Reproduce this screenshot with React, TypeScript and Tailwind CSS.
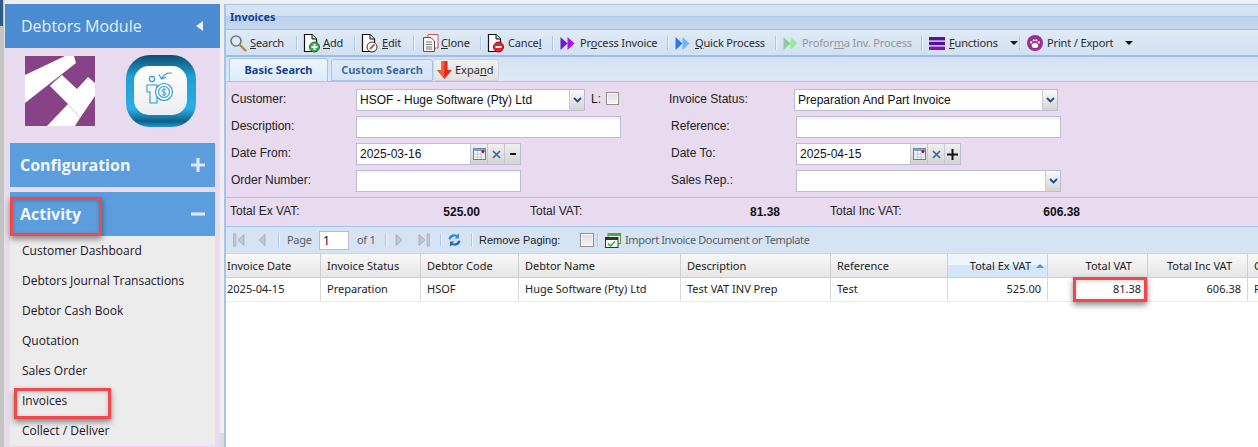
import React from "react";

const Paper = ({ children }: { children?: React.ReactNode }) => (
  <svg width="20" height="20" viewBox="0 0 20 20" className="-ml-[3px] shrink-0">
    <path d="M3.5 1.5H11L15.5 6V18.5H3.5Z" fill="#fff" stroke="#111" strokeWidth="1.2" />
    <path d="M11 1.5V6H15.5" fill="#ddd" stroke="#111" strokeWidth="1" />
    {children}
  </svg>
);

const Search = () => (
  <svg width="18" height="18" viewBox="0 0 18 18" className="shrink-0">
    <circle cx="7" cy="7" r="5" fill="#dfeaf5" stroke="#6b7785" strokeWidth="1.6" />
    <path d="M11 11L16.5 16.5" stroke="#b08a4a" strokeWidth="2.4" strokeLinecap="round" />
  </svg>
);
const Add = () => (
  <Paper>
    <circle cx="13.5" cy="14" r="5" fill="#3eaa4a" stroke="#1f7a2c" />
    <path d="M13.5 11V17M10.5 14H16.5" stroke="#fff" strokeWidth="1.8" />
  </Paper>
);
const Edit = () => (
  <Paper>
    <circle cx="13" cy="14" r="5" fill="#fff" stroke="#333" />
    <path d="M11 16L15.5 11.5" stroke="#d9532c" strokeWidth="2" />
  </Paper>
);
const Clone = () => (
  <svg width="20" height="20" viewBox="0 0 20 20" className="shrink-0">
    <path d="M7 1.5H17V15H7Z" fill="#fff" stroke="#d9534f" />
    <path d="M2.5 4.5H10L13.5 8V18.5H2.5Z" fill="#f7f7f7" stroke="#555" />
    <path d="M5 9H11M5 11.5H11M5 14H11M5 16H11" stroke="#777" />
  </svg>
);
const Cancel = () => (
  <Paper>
    <circle cx="13.5" cy="14" r="5" fill="#e3202c" stroke="#a8101a" />
    <path d="M10.5 14H16.5" stroke="#fff" strokeWidth="2" />
  </Paper>
);
const Chevs = ({ a, b }: { a: string; b: string }) => (
  <svg width="15" height="15" viewBox="0 0 15 15" className="shrink-0">
    <path d="M0.5 1L7.5 7.5L0.5 14Z" fill={a} />
    <path d="M7.5 1L14.5 7.5L7.5 14Z" fill={b} />
  </svg>
);
const Bars = () => (
  <svg width="16" height="13" viewBox="0 0 16 13" className="shrink-0">
    <rect width="16" height="3.4" fill="#5a0f9c" />
    <rect y="4.8" width="16" height="3.4" fill="#5a0f9c" />
    <rect y="9.6" width="16" height="3.4" fill="#7a14b8" />
  </svg>
);
const Paw = () => (
  <svg width="16" height="16" viewBox="0 0 16 16" className="shrink-0">
    <circle cx="8" cy="8" r="8" fill="#a02c94" />
    <ellipse cx="8" cy="10.4" rx="3.2" ry="2.5" fill="#fff" />
    <circle cx="4.2" cy="7.4" r="1.1" fill="#fff" />
    <circle cx="6.7" cy="5.3" r="1.1" fill="#fff" />
    <circle cx="9.3" cy="5.3" r="1.1" fill="#fff" />
    <circle cx="11.8" cy="7.4" r="1.1" fill="#fff" />
  </svg>
);
const Caret = () => <span className="ml-[8px] inline-block h-0 w-0 border-x-[4px] border-t-[4px] border-x-transparent border-t-[#111]" />;

const Sep = () => <span className="block h-[14px] w-px shrink-0 bg-[#a8c8ee] shadow-[1px_0_0_#eef4fb]" />;

const U = ({ children }: { children: React.ReactNode }) => <span className="underline underline-offset-1">{children}</span>;

const tools: { icon: React.ReactNode; label: React.ReactNode; cls: string; text?: string; gap: string }[] = [
  { icon: <Search />, label: <><U>S</U>earch</>, cls: "w-[67px]", gap: "gap-[3px]" },
  { icon: <Add />, label: <><U>A</U>dd</>, cls: "w-[50px]", gap: "gap-[2px]" },
  { icon: <Edit />, label: <><U>E</U>dit</>, cls: "w-[51px]", gap: "gap-[3px]" },
  { icon: <Clone />, label: <><U>C</U>lone</>, cls: "w-[59px]", gap: "gap-0" },
  { icon: <Cancel />, label: <>Cance<U>l</U></>, cls: "w-[64px]", gap: "gap-[3px]" },
  { icon: <Chevs a="#6a1fc4" b="#b20ff0" />, label: <>Pr<U>o</U>cess Invoice</>, cls: "w-[107px]", gap: "gap-[5px]" },
  { icon: <Chevs a="#2f74f0" b="#6db4f8" />, label: <><U>Q</U>uick Process</>, cls: "w-[100px]", gap: "gap-[5px]" },
  { icon: <Chevs a="#90c8a0" b="#90f090" />, label: <>Profor<U>m</U>a Inv. Process</>, cls: "w-[138px]", text: "text-[#8e959c]", gap: "gap-[4px]" },
  { icon: <Bars />, label: <><U>F</U>unctions</>, cls: "w-[90px]", gap: "gap-[4px]" },
  { icon: <Paw />, label: <>Print / Export</>, cls: "w-[110px]", gap: "gap-[4px]" },
];

const Input = ({ w, v }: { w: string; v?: string }) => (
  <div className={`${w} h-[22px] shrink-0 border border-[#b9bdcf] bg-white bg-[linear-gradient(#f0f0f0,#fff_4px)] px-[3px] text-[12px] leading-[21px] text-[#111]`}>{v}</div>
);
const Combo = ({ w, v }: { w: string; v?: string }) => (
  <div className={`${w} flex h-[22px] shrink-0 border border-[#b9bdcf] bg-white text-[12px] leading-[21px] text-[#111]`}>
    <span className="flex-1 px-[3px]">{v}</span>
    <span className="flex w-[15px] items-center justify-center border-l border-[#c8ccd6] bg-[linear-gradient(#fafafa,#d4d4d4)]">
      <svg width="9" height="6" viewBox="0 0 9 6"><path d="M1 1L4.5 4.5L8 1" fill="none" stroke="#1d4a8c" strokeWidth="1.8" /></svg>
    </span>
  </div>
);
const DateField = ({ v, last }: { v: string; last: React.ReactNode }) => (
  <div className="flex h-[22px] w-[165px] shrink-0 border border-[#b9bdcf] bg-white text-[12px] leading-[21px] text-[#111]">
    <span className="w-[113px] px-[3px]">{v}</span>
    <span className="flex w-[17px] items-center justify-center border-l border-[#c2c6d0] bg-[linear-gradient(#f0f0f0,#d0d0d0)]">
      <svg width="13" height="12" viewBox="0 0 13 12">
        <rect x="0.5" y="0.5" width="12" height="11" fill="#fff" stroke="#5b7fa8" />
        <rect x="0.5" y="0.5" width="12" height="2.5" fill="#7f9fc4" />
        <path d="M1 6H12M1 9H12M4.5 3V11M8 3V11" stroke="#b8c8da" />
        <circle cx="10" cy="3.5" r="1.6" fill="#a01030" />
      </svg>
    </span>
    <span className="flex w-[17px] items-center justify-center border-l border-[#c2c6d0] bg-[linear-gradient(#f0f0f0,#d4d4d4)]">
      <svg width="9" height="9" viewBox="0 0 9 9"><path d="M1 1L8 8M8 1L1 8" stroke="#2e6aa8" strokeWidth="1.7" /></svg>
    </span>
    <span className="flex w-[16px] items-center justify-center border-l border-[#c2c6d0] bg-[linear-gradient(#f0f0f0,#d4d4d4)]">{last}</span>
  </div>
);
const Label = ({ cls, children }: { cls: string; children: React.ReactNode }) => (
  <span className={`${cls} -mt-[3px] shrink-0 text-[12px] leading-[22px] text-[#222]`}>{children}</span>
);

const Total = ({ label, value }: { label: string; value: string }) => (
  <div className="flex w-[300px] shrink-0 items-center justify-between pr-[50px]">
    <span className="-mt-[2px] text-[12px] text-[#222]">{label}</span>
    <span className="text-[12px] font-bold text-[#111]">{value}</span>
  </div>
);

const cols: { w: string; t: string; v: string; right?: boolean; sort?: boolean; pad: string; hd: string }[] = [
  { w: "w-[95px]", t: "Invoice Date", v: "2025-04-15", pad: "pl-[1px]", hd: "pl-[1px]" },
  { w: "w-[100px]", t: "Invoice Status", v: "Preparation", pad: "pl-[6px]", hd: "pl-[6px]" },
  { w: "w-[98px]", t: "Debtor Code", v: "HSOF", pad: "pl-[6px]", hd: "pl-[6px]" },
  { w: "w-[162px]", t: "Debtor Name", v: "Huge Software (Pty) Ltd", pad: "pl-[6px]", hd: "pl-[6px]" },
  { w: "w-[150px]", t: "Description", v: "Test VAT INV Prep", pad: "pl-[6px]", hd: "pl-[6px]" },
  { w: "w-[117px]", t: "Reference", v: "Test", pad: "pl-[6px]", hd: "pl-[6px]" },
  { w: "w-[100px]", t: "Total Ex VAT", v: "525.00", right: true, sort: true, pad: "justify-end pr-[6px]", hd: "justify-end pr-[15px]" },
  { w: "w-[100px]", t: "Total VAT", v: "81.38", right: true, pad: "justify-end pr-[6px]", hd: "justify-end pr-[15px]" },
  { w: "w-[100px]", t: "Total Inc VAT", v: "606.38", right: true, pad: "justify-end pr-[6px]", hd: "justify-end pr-[15px]" },
  { w: "w-[40px]", t: "C", v: "P", pad: "pl-[6px]", hd: "pl-[6px]" },
];

const NavTri = ({ dir, bar }: { dir: "l" | "r"; bar?: boolean }) => (
  <svg width="12" height="14" viewBox="0 0 12 14" className="shrink-0">
    {dir === "l" ? (
      <>
        {bar && <rect x="0.5" y="1" width="2.5" height="12" fill="#c4cad2" stroke="#9aa2ac" strokeWidth="0.6" />}
        <path d="M11 1.5V12.5L5 7Z" fill="#c0c6ce" stroke="#9aa2ac" strokeWidth="0.7" />
      </>
    ) : (
      <>
        <path d="M1 1.5V12.5L7 7Z" fill="#c0c6ce" stroke="#9aa2ac" strokeWidth="0.7" />
        {bar && <rect x="9" y="1" width="2.5" height="12" fill="#c4cad2" stroke="#9aa2ac" strokeWidth="0.6" />}
      </>
    )}
  </svg>
);

const Red = ({ cls }: { cls: string }) => (
  <div className={`${cls} absolute border-[3px] border-[#f2474b] shadow-[0_3px_6px_rgba(0,0,0,0.45),inset_0_1px_4px_rgba(0,0,0,0.2)]`} />
);

const menu = ["Customer Dashboard", "Debtors Journal Transactions", "Debtor Cash Book", "Quotation", "Sales Order", "Invoices", "Collect / Deliver"];

export default function App() {
  return (
    <div className="relative flex h-[447px] w-[1258px] overflow-hidden bg-[#efefef] font-['Noto_Sans',sans-serif]">
      <div className="h-full w-[5px] shrink-0 border-r border-[#e2e2e2] bg-[#c4c4c4]">
        <div className="h-[26px] w-[3px] bg-[#2e5c86]" />
      </div>

      {/* sidebar */}
      <aside className="mt-[4px] flex w-[215px] shrink-0 flex-col bg-[#e8daef] font-['Open_Sans',sans-serif]">
        <div className="flex h-[44px] items-center justify-between bg-[#4a8bd2] pl-[16px] pr-[17px] text-[16px] text-[#e6eef8]">
          <span>Debtors Module</span>
          <span className="h-0 w-0 border-y-[5px] border-r-[7px] border-y-transparent border-r-[#e6eef8]" />
        </div>
        <div className="flex h-[95px] items-start pl-[20px] pt-[8px]">
          <svg width="70" height="70" viewBox="0 0 70 70" className="shrink-0">
            <rect width="70" height="70" fill="#874385" />
            <path d="M0 19L40 0H49L51 7L0 47Z" fill="#fff" />
            <path d="M25 30L37 19L52 33L63 21L70 27V40L55 62L43 48Z" fill="#fff" />
            <path d="M22 70L43 48L55 62L50 70Z" fill="#fff" />
            <path d="M25 30L37 19M43 48L55 62" stroke="#d4d4d4" strokeWidth="0.8" />
          </svg>
          <svg width="72" height="74" viewBox="0 0 72 74" className="ml-[30px] -mt-[2px] shrink-0">
            <defs>
              <linearGradient id="ring" x1="0" y1="0" x2="0" y2="1">
                <stop offset="0" stopColor="#0f4f70" />
                <stop offset="0.3" stopColor="#1f9fd6" />
                <stop offset="0.75" stopColor="#2aaee4" />
                <stop offset="0.92" stopColor="#0f5f88" />
                <stop offset="1" stopColor="#1c9ad8" />
              </linearGradient>
              <linearGradient id="pad" x1="0" y1="0" x2="0" y2="1">
                <stop offset="0" stopColor="#ffffff" />
                <stop offset="1" stopColor="#ebeef0" />
              </linearGradient>
            </defs>
            <rect x="1" y="1" width="70" height="72" rx="24" fill="url(#ring)" />
            <rect x="9" y="12" width="53" height="49" rx="15" fill="url(#pad)" />
            <circle cx="27" cy="25" r="2.6" fill="none" stroke="#2b9ad0" strokeWidth="1.1" />
            <path d="M22 38V31H32V49H25V38Z" fill="none" stroke="#2b9ad0" strokeWidth="1.1" />
            <circle cx="39" cy="38" r="8.5" fill="#f6f8f9" stroke="#2b9ad0" strokeWidth="1.1" />
            <circle cx="39" cy="38" r="5.5" fill="none" stroke="#2b9ad0" strokeWidth="1.1" />
            <path d="M41 36C40 34.800 37 35 37 36.800C37 38.800 41 37.800 41 39.800C41 41.400 38 41.600 37 40.500M39 33.800V42.200" fill="none" stroke="#2b9ad0" strokeWidth="0.9" />
            <path d="M47 19C42 18.500 39 20.500 37 24M34 20.500L36.500 25L41 23" fill="none" stroke="#2b9ad0" strokeWidth="1.1" />
          </svg>
        </div>
        <div className="px-[5px]">
          <div className="flex h-[44px] items-center justify-between bg-[#5c9edd] pl-[10px] pr-[10px] text-[16px] font-bold text-[#f2f7fc]">
            <span>Configuration</span>
            <svg width="14" height="14" viewBox="0 0 14 14"><path d="M7 0V14M0 7H14" stroke="#dce8f5" strokeWidth="3.2" /></svg>
          </div>
          <div className="mt-[5px] flex h-[44px] items-center justify-between bg-[#5c9edd] pl-[10px] pr-[10px] text-[16px] font-bold text-[#f2f7fc]">
            <span>Activity</span>
            <svg width="14" height="14" viewBox="0 0 14 14"><path d="M0 7H14" stroke="#dce8f5" strokeWidth="3.2" /></svg>
          </div>
          <ul className="flex flex-col bg-[#ececec] pl-[12px] text-[12px] text-[#1c1428]">
            {menu.map((m) => (
              <li key={m} className="flex h-[30px] items-center">{m}</li>
            ))}
          </ul>
        </div>
      </aside>

      <div className="flex h-full w-[4px] shrink-0 flex-col">
        <div className="flex-1 bg-[#efefef]" />
        <div className="h-[14px] bg-[#dcdcdc]" />
      </div>

      {/* main */}
      <main className="mt-[4px] flex min-w-0 flex-1 flex-col border-l-2 border-t border-[#a4c4ea] bg-white">
        <div className="flex h-[24px] shrink-0 items-start bg-[linear-gradient(#d6e4f5_0,#d2e1f3_11px,#aac7ea_11px,#bcd1ed_12px,#c6d8ef_100%)] pl-[4px] text-[11px] font-bold leading-[24px] text-[#15428b]">
          Invoices
        </div>
        <div className="flex h-[28px] shrink-0 items-center border-y border-[#9dbde8] border-b-[2px] bg-[linear-gradient(#e0eaf6,#d2e0f1)] pl-[3px] pt-[1px] text-[11px] tracking-[-0.15px] text-[#2a2a2a]">
          {tools.map((t, i) => (
            <React.Fragment key={i}>
              <div className={`${t.cls} ${t.text ?? ""} ${t.gap} flex shrink-0 items-center whitespace-nowrap`}>
                {t.icon}
                <span>{t.label}</span>
                {i >= 8 && <Caret />}
              </div>
              {i < tools.length - 1 && <Sep />}
              {i < tools.length - 1 && <span className="w-[7px] shrink-0" />}
            </React.Fragment>
          ))}
        </div>
        <div className="flex h-[25px] shrink-0 items-end border-b border-[#a4c4ea] bg-[linear-gradient(#d4e1f2,#dde9f7)] pl-[3px] text-[11px] font-bold">
          <div className="flex h-[23px] w-[99px] items-center justify-center rounded-t-[3px] border border-b-0 border-[#a4c4ea] bg-[linear-gradient(#eef5fd,#dcebfb)] text-[#15428b]">Basic Search</div>
          <div className="ml-[3px] flex h-[22px] w-[102px] items-center justify-center rounded-t-[3px] border border-[#a4c4ea] bg-[linear-gradient(#dfeaf8,#d6e5f7)] text-[#3c6ba6]">Custom Search</div>
          <div className="flex h-[22px] w-[66px] items-center gap-[3px] rounded-[3px] border border-[#d0d4da] bg-[linear-gradient(#f0f0f0,#e2e2e2)] pl-[3px] font-normal text-[#2a2a2a]">
            <svg width="15" height="18" viewBox="0 0 15 18" className="shrink-0">
              <path d="M4.500 0H10.500V9H15L7.500 18L0 9H4.500Z" fill="#e4261c" />
              <path d="M4.500 0H7.500V17L0 9H4.500Z" fill="#f25a3c" />
            </svg>
            <span>Expa<U>n</U>d</span>
          </div>
        </div>

        <div className="flex h-[116px] shrink-0 flex-col gap-[5px] border-b border-[#a4c4ea] bg-[#e8daef] pl-[5px] pt-[7px] font-['Liberation_Sans',sans-serif]">
          <div className="flex items-center">
            <Label cls="w-[125px]">Customer:</Label>
            <Combo w="w-[229px]" v="HSOF - Huge Software (Pty) Ltd" />
            <Label cls="ml-[6px] w-[15px]">L:</Label>
            <span className="-mt-[3px] h-[13px] w-[13px] shrink-0 border border-[#8f8f8f] bg-[linear-gradient(#ddd,#f5f5f5)] shadow-[inset_0_0_0_1px_#fff]" />
            <Label cls="ml-[50px] w-[125px]">Invoice Status:</Label>
            <Combo w="w-[264px]" v="Preparation And Part Invoice" />
          </div>
          <div className="flex items-center">
            <Label cls="w-[125px]">Description:</Label>
            <Input w="w-[265px]" />
            <Label cls="ml-[50px] w-[125px]">Reference:</Label>
            <Input w="w-[265px]" />
          </div>
          <div className="flex items-center">
            <Label cls="w-[125px]">Date From:</Label>
            <DateField v="2025-03-16" last={<svg width="8" height="8" viewBox="0 0 8 8"><path d="M1 4H7" stroke="#111" strokeWidth="2" /></svg>} />
            <Label cls="ml-[150px] w-[125px]">Date To:</Label>
            <DateField v="2025-04-15" last={<svg width="11" height="11" viewBox="0 0 11 11"><path d="M5.500 0V11M0 5.500H11" stroke="#111" strokeWidth="2" /></svg>} />
          </div>
          <div className="flex items-center">
            <Label cls="w-[125px]">Order Number:</Label>
            <Input w="w-[165px]" />
            <Label cls="ml-[150px] w-[125px]">Sales Rep.:</Label>
            <Combo w="w-[265px]" />
          </div>
        </div>

        <div className="flex h-[29px] shrink-0 items-center border-b border-[#a4c4ea] bg-[#e8daef] pl-[4px] font-['Liberation_Sans',sans-serif]">
          <Total label="Total Ex VAT:" value="525.00" />
          <Total label="Total VAT:" value="81.38" />
          <Total label="Total Inc VAT:" value="606.38" />
        </div>

        <div className="flex h-[27px] shrink-0 items-center border-b border-[#c8d8ec] bg-[#d6e3f3] text-[11px] tracking-[-0.3px] text-[#555d66]">
          <span className="ml-[7px]"><NavTri dir="l" bar /></span>
          <span className="ml-[9px]"><NavTri dir="l" /></span>
          <span className="ml-[12px]"><Sep /></span>
          <span className="ml-[8px] w-[24px]">Page</span>
          <div className="ml-[8px] h-[19px] w-[30px] border border-[#b9bdcf] bg-white pl-[3px] text-[12px] leading-[18px] text-[#111]">1</div>
          <span className="ml-[8px] w-[19px]">of 1</span>
          <span className="ml-[9px]"><Sep /></span>
          <span className="ml-[9px]"><NavTri dir="r" /></span>
          <span className="ml-[11px]"><NavTri dir="r" bar /></span>
          <span className="ml-[10px]"><Sep /></span>
          <svg width="15" height="16" viewBox="0 0 15 16" className="ml-[6px] shrink-0">
            <path d="M1.500 7C2 3.500 6 1 10 3L12 1.500V6.500H7.500L9.500 4.800C7 3.800 4.500 5 3.800 7.500Z" fill="#2e8ae0" />
            <path d="M13.500 9C13 12.500 9 15 5 13L3 14.500V9.500H7.500L5.500 11.200C8 12.200 10.500 11 11.200 8.500Z" fill="#1d6cc0" />
          </svg>
          <span className="ml-[9px]"><Sep /></span>
          <span className="ml-[7px] w-[101px] font-['Liberation_Sans',sans-serif] text-[11px] tracking-normal text-[#222]">Remove Paging:</span>
          <span className="h-[14px] w-[14px] shrink-0 border border-[#8f8f8f] bg-[linear-gradient(#ddd,#f5f5f5)] shadow-[inset_0_0_0_1px_#fff]" />
          <span className="ml-[3px]"><Sep /></span>
          <svg width="16" height="15" viewBox="0 0 16 15" className="ml-[7px] shrink-0">
            <rect x="3" y="0.500" width="12.500" height="10" fill="#f2f7ee" stroke="#4a9a3a" />
            <rect x="3" y="0.500" width="12.500" height="2.500" fill="#4fae3c" />
            <rect x="0.500" y="4.500" width="12.500" height="10" fill="#fff" stroke="#333" />
            <rect x="0.500" y="4.500" width="12.500" height="2.500" fill="#333" />
            <path d="M3 10.500L5.500 13L10 8.500" fill="none" stroke="#2bbb3c" strokeWidth="1.700" />
          </svg>
          <span className="ml-[4px] tracking-[-0.37px]">Import Invoice Document or Template</span>
        </div>

        <div className="pb-[200px] text-[11px] text-[#222]">
          <div className="flex h-[24px] border-b border-[#cfcfcf]">
            {cols.map((c) => (
              <div
                key={c.t}
                className={`${c.w} ${c.hd} flex shrink-0 items-center border-r border-[#cfcfcf] pt-[1px] ${c.sort ? "bg-[linear-gradient(#eef5fd_0,#eef5fd_50%,#d6e6f8_50%,#d6e6f8_100%)]" : "bg-[linear-gradient(#f8f8f8,#e6e6e6)]"}`}
              >
                <span className={c.sort ? "-mr-[12px] flex items-center" : ""}>
                  {c.t}
                  {c.sort && <span className="ml-[5px] block h-0 w-0 border-x-[4px] border-b-[4px] border-x-transparent border-b-[#5c8fcf]" />}
                </span>
              </div>
            ))}
          </div>
          <div className="flex h-[24px] border-b border-[#ececec]">
            {cols.map((c) => (
              <div key={c.t} className={`${c.w} ${c.pad} flex shrink-0 items-center border-r border-[#d8d8d8] pb-[1px]`}>
                {c.v}
              </div>
            ))}
          </div>
        </div>
      </main>

      <Red cls="left-[10px] top-[197px] h-[39px] w-[92px]" />
      <Red cls="left-[14px] top-[388px] h-[31px] w-[97px]" />
      <Red cls="left-[1073px] top-[277px] h-[25px] w-[74px]" />
    </div>
  );
}
